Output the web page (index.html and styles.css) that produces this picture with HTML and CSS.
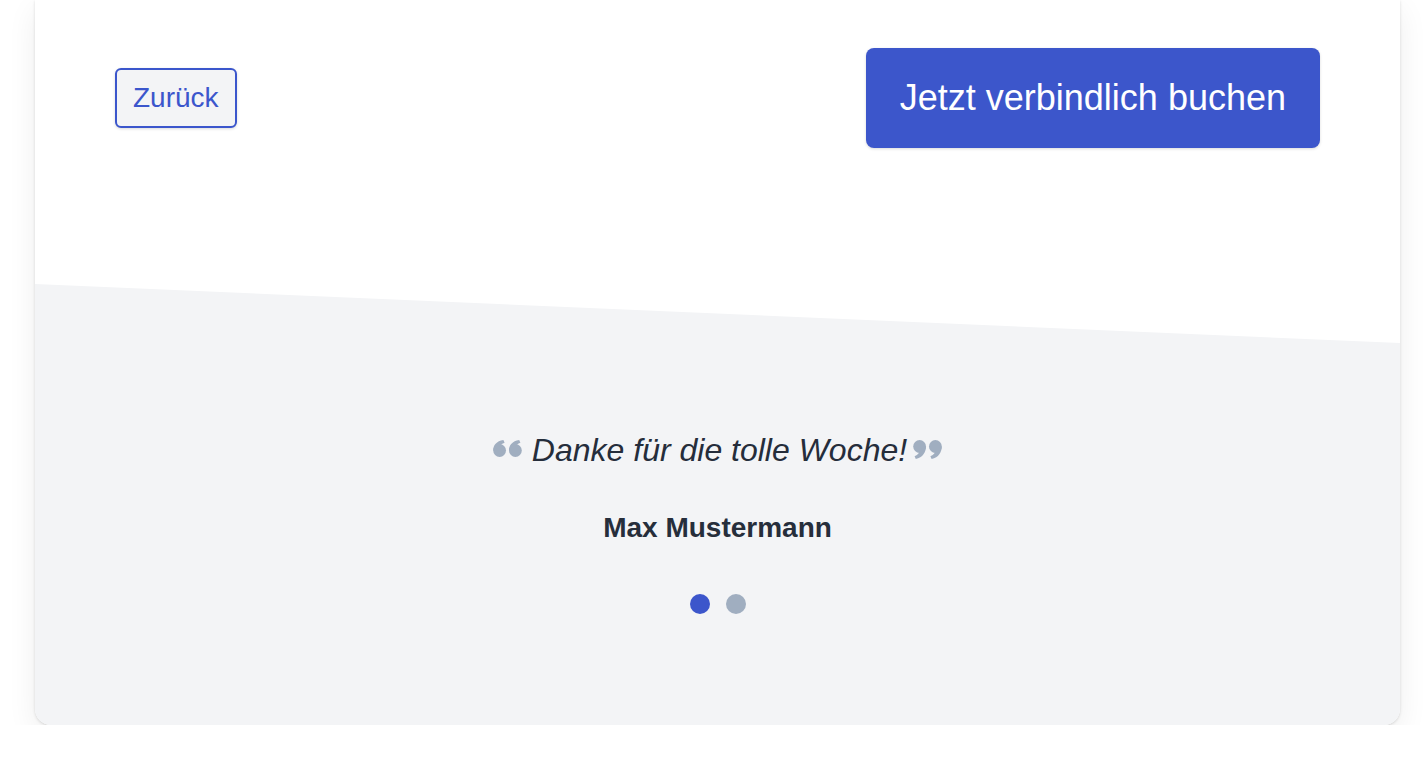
FILE: index.html
```html
<!DOCTYPE html>
<html lang="de">
<head>
<meta charset="utf-8">
<title>Buchung</title>
<link rel="stylesheet" href="styles.css">
</head>
<body>
<div class="card">
  <section class="top">
    <div class="actions">
      <button class="btn-back">Zurück</button>
      <button class="btn-book">Jetzt verbindlich buchen</button>
    </div>
  </section>
  <section class="testimonials">
    <div class="quote">
      <svg class="qmark" width="29" height="17" viewBox="0 0 29 17" aria-hidden="true">
        <g fill="#a0aec0">
          <circle cx="6.6" cy="10.5" r="6.4"/>
          <path d="M0.2 10.5 C0.2 5 3.4 1.2 10.4 0 L11.6 2.8 C8 4 6.6 6 6.6 7.6 Z"/>
          <circle cx="22.4" cy="10.5" r="6.4"/>
          <path d="M16 10.5 C16 5 19.2 1.2 26.2 0 L27.4 2.8 C23.8 4 22.4 6 22.4 7.6 Z"/>
        </g>
      </svg>
      <p class="quote-text">Danke für die tolle Woche!</p>
      <svg class="qmark qmark-r" width="29" height="19" viewBox="0 0 29 19" aria-hidden="true">
        <g fill="#a0aec0">
          <circle cx="6.6" cy="6.5" r="6.4"/>
          <path d="M13 6.5 C13 12 9.8 17.8 2.8 19 L1.6 16.2 C5.2 15 6.6 12.4 6.6 10 Z"/>
          <circle cx="22.4" cy="6.5" r="6.4"/>
          <path d="M28.8 6.5 C28.8 12 25.6 17.8 18.6 19 L17.4 16.2 C21 15 22.4 12.4 22.4 10 Z"/>
        </g>
      </svg>
    </div>
    <p class="author">Max Mustermann</p>
    <div class="dots">
      <span class="dot active"></span>
      <span class="dot"></span>
    </div>
  </section>
</div>
</body>
</html>
```
FILE: styles.css
```css
html, body {
  margin: 0;
  padding: 0;
  background: #ffffff;
  font-family: "Liberation Sans", Arial, Helvetica, sans-serif;
}

.card {
  width: 1365px;
  margin-left: 35px;
  background: #ffffff;
  border-radius: 0 0 16px 16px;
  overflow: hidden;
  box-shadow: 0 1px 3px rgba(0, 0, 0, 0.14), 0 10px 30px rgba(0, 0, 0, 0.07);
  display: flex;
  flex-direction: column;
}

.top {
  height: 284px;
  box-sizing: border-box;
  padding: 48px 80px 0 80px;
}

.actions {
  display: flex;
  justify-content: space-between;
  align-items: center;
}

button {
  font-family: inherit;
  cursor: pointer;
}

.btn-back {
  font-size: 28px;
  line-height: 42px;
  padding: 7px 16px;
  color: #3b56cc;
  background: #f3f4f6;
  border: 2px solid #3b56cc;
  border-radius: 6px;
  box-shadow: 0 1px 3px rgba(0, 0, 0, 0.15);
}

.btn-book {
  font-size: 36px;
  line-height: 54px;
  padding: 23px 34px;
  color: #ffffff;
  background: #3c56cb;
  border: 0;
  border-radius: 8px;
  box-shadow: 0 1px 3px rgba(0, 0, 0, 0.15);
}

.testimonials {
  height: 441px;
  box-sizing: border-box;
  padding-top: 142px;
  background: #f3f4f6;
  clip-path: polygon(0 0, 100% 59px, 100% 100%, 0 100%);
  display: flex;
  flex-direction: column;
  align-items: center;
}

.quote {
  display: flex;
  align-items: flex-start;
}

.qmark {
  margin-top: 14px;
  margin-right: 10px;
  flex: none;
}

.qmark-r {
  margin-right: 0;
  margin-left: 6px;
}

.quote-text {
  margin: 0;
  font-size: 32px;
  line-height: 48px;
  font-style: italic;
  color: #252d3b;
}

.author {
  margin: 33px 0 0 0;
  font-size: 28px;
  line-height: 42px;
  font-weight: bold;
  color: #262e3b;
}

.dots {
  margin-top: 45px;
  display: flex;
  gap: 16px;
}

.dot {
  width: 20px;
  height: 20px;
  border-radius: 50%;
  background: #a0aec0;
}

.dot.active {
  background: #3c56cb;
}
```
